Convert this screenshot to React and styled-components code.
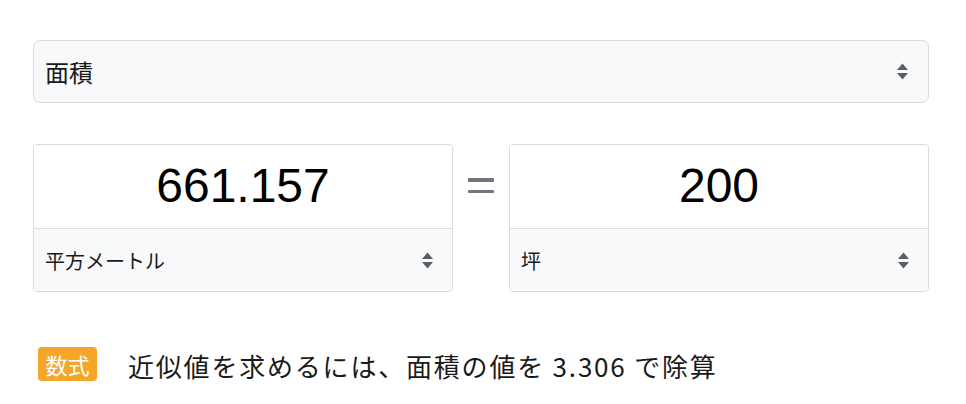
import React from "react";
import styled, { createGlobalStyle } from "styled-components";

const Global = createGlobalStyle`
  html, body { margin: 0; padding: 0; background: #ffffff; }
  body { font-family: "Liberation Sans", "Noto Sans CJK JP", sans-serif; color: #111; }
`;

const Page = styled.div`
  width: 896px;
  padding: 40px 0 0 33px;
  display: flex;
  flex-direction: column;
`;

const SelectBox = styled.div`
  box-sizing: border-box;
  height: ${(p) => p.$h}px;
  display: flex;
  align-items: center;
  justify-content: space-between;
  padding: 0 ${(p) => p.$pr}px 0 11px;
  background: #f8f9fa;
  font-family: "Noto Sans CJK JP", sans-serif;
  font-size: ${(p) => p.$fs}px;
  color: #1a1a1a;
`;

const TopSelect = styled(SelectBox)`
  border: 1.5px solid #d9dadb;
  border-radius: 7px;
`;

const Row = styled.div`
  margin-top: 41px;
  display: grid;
  grid-template-columns: 420px 56px 420px;
`;

const Box = styled.div`
  box-sizing: border-box;
  border: 1.5px solid #d9dadb;
  border-radius: 4px;
  overflow: hidden;
  display: flex;
  flex-direction: column;
`;

const Value = styled.div`
  height: 84px;
  display: flex;
  align-items: center;
  justify-content: center;
  padding-bottom: 2px;
  box-sizing: border-box;
  font-family: "Liberation Sans", Arial, sans-serif;
  font-size: 48px;
  color: #000;
  background: #fff;
  border-bottom: 1.5px solid #dcdddf;
`;

const Equals = styled.div`
  display: flex;
  flex-direction: column;
  align-items: center;
  padding-top: 34px;
  gap: 8px;
`;

const Bar = styled.span`
  width: 26px;
  height: 3.5px;
  background: #6f757b;
  border-radius: 1px;
`;

const Formula = styled.div`
  margin-top: 51px;
  padding-left: 5px;
  display: flex;
  align-items: center;
  gap: 31px;
`;

const Badge = styled.span`
  width: 59px;
  height: 34px;
  border-radius: 4px;
  background: #f5a62a;
  color: #fff;
  display: flex;
  align-items: center;
  justify-content: center;
  font-family: "Noto Sans CJK JP", sans-serif;
  font-size: 22px;
  font-weight: 400;
`;

const FormulaText = styled.span`
  font-family: "Noto Sans CJK JP", sans-serif;
  font-size: 26px;
  letter-spacing: 1.8px;
  color: #1a1a1a;
  margin-top: 4px;
`;

const Arrows = () => (
  <svg width="13" height="19" viewBox="0 0 13 19" aria-hidden="true">
    <path d="M6.5 1.5 L12 8 L1 8 Z" fill="#5a5e63" />
    <path d="M6.5 17.5 L12 11 L1 11 Z" fill="#5a5e63" />
  </svg>
);

const UnitBox = ({ label, value }) => (
  <Box>
    <Value>{value}</Value>
    <SelectBox $h={62} $fs={20} $pr={18}>
      <span>{label}</span>
      <Arrows />
    </SelectBox>
  </Box>
);

export default function App() {
  return (
    <>
      <Global />
      <Page>
        <TopSelect $h={63} $fs={24} $pr={19}>
          <span>面積</span>
          <Arrows />
        </TopSelect>
        <Row>
          <UnitBox value="661.157" label="平方メートル" />
          <Equals>
            <Bar />
            <Bar />
          </Equals>
          <UnitBox value="200" label="坪" />
        </Row>
        <Formula>
          <Badge>数式</Badge>
          <FormulaText>近似値を求めるには、面積の値を 3.306 で除算</FormulaText>
        </Formula>
      </Page>
    </>
  );
}
